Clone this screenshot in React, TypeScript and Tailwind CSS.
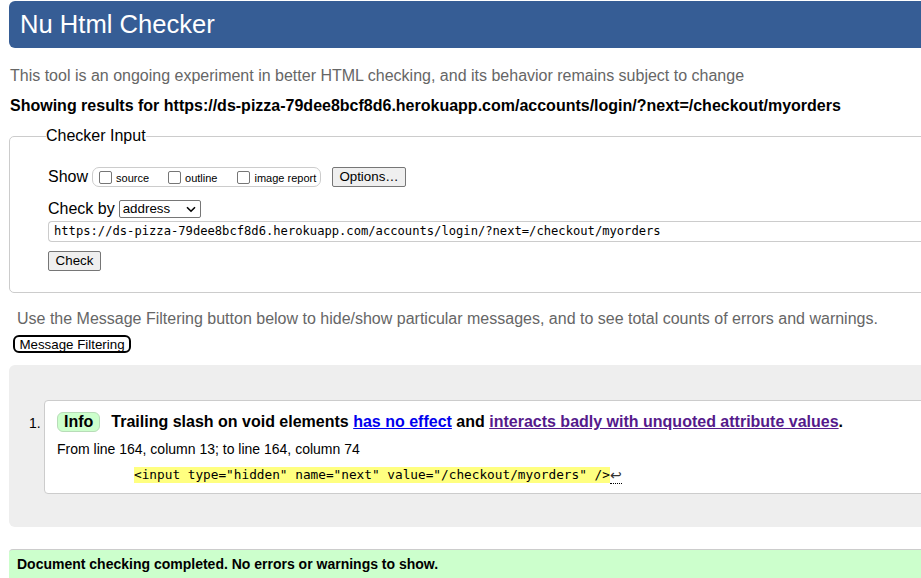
import React from "react";

const sans = "font-['Liberation_Sans',Arial,sans-serif]";
const mono = "font-['DejaVu_Sans_Mono','Liberation_Mono',monospace]";

function Box({ label }: { label: string }) {
  return (
    <label className="flex items-center">
      <span className="w-[13px] h-[13px] border border-[#767676] rounded-[2px] bg-white" />
      <span className="ml-[4px] text-[11px] leading-[13px] text-black translate-y-[1px]">{label}</span>
    </label>
  );
}

export default function App() {
  return (
    <div className={`w-[921px] h-[578px] overflow-hidden bg-white text-black ${sans}`}>
      <div className="w-[1100px]">
        {/* Header */}
        <div className="ml-[9px] mt-[1px] h-[47px] rounded-[6px] bg-[#365d95] pl-[11px] flex items-center">
          <h1 className="text-white text-[25.6px] leading-none font-normal">Nu Html Checker</h1>
        </div>

        <p className="ml-[10px] mt-[19px] text-[16px] leading-[18px] text-[#666]">
          This tool is an ongoing experiment in better HTML checking, and its behavior remains subject to change
        </p>
        <p className="ml-[10px] mt-[12px] text-[16px] leading-[18px] font-bold">
          Showing results for https://ds-pizza-79dee8bcf8d6.herokuapp.com/accounts/login/?next=/checkout/myorders
        </p>

        {/* Checker Input */}
        <fieldset className="ml-[9px] mt-[12px] w-[1080px] border border-[#ccc] rounded-[5px] pl-[38px] pb-[20px]">
          <legend className="-ml-[2px] text-[16px] leading-[18px] text-black p-0">Checker Input</legend>
          <div className="mt-[22px] flex items-center h-[20px]">
            <span className="text-[16px] leading-[18px]">Show</span>
            <div className="ml-[4px] h-[20px] w-[229px] border border-[#ccc] rounded-[7px] flex items-center pl-[6px]">
              <Box label="source" />
              <span className="w-[19px]" />
              <Box label="outline" />
              <span className="w-[20px]" />
              <Box label="image report" />
            </div>
            <button className="ml-[11px] h-[20px] w-[74px] bg-[#efefef] border border-[#767676] rounded-[2px] text-[13.33px] leading-none text-black">
              Options…
            </button>
          </div>
          <div className="mt-[13px] flex items-center h-[18px]">
            <span className="text-[16px] leading-[18px]">Check by</span>
            <div className="ml-[4px] h-[18px] w-[82px] border border-[#767676] rounded-[2px] bg-white flex items-center pl-[3px] pr-[4px] justify-between">
              <span className="text-[13.33px] leading-none">address</span>
              <svg width="10" height="7" viewBox="0 0 10 7">
                <path d="M1 1.2 L5 5.2 L9 1.2" fill="none" stroke="#000" strokeWidth="1.6" />
              </svg>
            </div>
          </div>
          <div className={`mt-[3px] h-[21px] border border-[#ccc] rounded-l-[4px] border-r-0 flex items-center pl-[5px] ${mono} text-[12.15px] leading-none text-black`}>
            https://ds-pizza-79dee8bcf8d6.herokuapp.com/accounts/login/?next=/checkout/myorders
          </div>
          <button className="mt-[9px] h-[20px] w-[53px] bg-[#efefef] border border-[#767676] rounded-[2px] text-[13.33px] leading-none text-black">
            Check
          </button>
        </fieldset>

        <p className="ml-[17px] mt-[17px] text-[16px] leading-[18px] text-[#666]">
          Use the Message Filtering button below to hide/show particular messages, and to see total counts of errors and warnings.
        </p>
        <button className="ml-[13px] mt-[7px] h-[18px] w-[118px] border-2 border-black rounded-[6px] bg-white text-[13.33px] leading-none text-black flex items-center justify-center">
          Message Filtering
        </button>

        {/* Results */}
        <div className="ml-[9px] mt-[12px] h-[162px] bg-[#eee] rounded-tl-[6px] rounded-bl-[6px] pt-[35px] flex">
          <div className="w-[35px] pt-[15px] pl-[20px] text-[14px] leading-[16px]">1.</div>
          <div className="flex-1 h-[94px] bg-white border border-[#ccc] rounded-[4px] pl-[12px] pt-[11px]">
            <div className="flex items-center h-[20px]">
              <span className="h-[20px] px-[6px] bg-[#ccffcc] border border-[#b8dcb8] rounded-[6px] text-[16px] font-bold leading-[18px] flex items-center">
                Info
              </span>
              <span className="ml-[11px] text-[16px] font-bold leading-[18px]">
                Trailing slash on void elements{" "}
                <a className="text-[#0000ee] underline">has no effect</a> and{" "}
                <a className="text-[#551a8b] underline">interacts badly with unquoted attribute values</a>.
              </span>
            </div>
            <p className="mt-[9px] text-[14px] leading-[16px]">From line 164, column 13; to line 164, column 74</p>
            <div className="mt-[10px] ml-[77px] flex items-center h-[16px]">
              <code className={`${mono} text-[12.75px] leading-[16px] bg-[#ffff80] whitespace-pre`}>
                {'<input type="hidden" name="next" value="/checkout/myorders" />'}
              </code>
              <span className="text-[14px] leading-[16px] text-[#333] border-b border-dotted border-black">↩</span>
            </div>
          </div>
        </div>

        <div className="ml-[9px] mt-[22px] h-[40px] bg-[#ccffcc] border-t border-[#ccc] rounded-tl-[4px] pl-[8px] pt-[6px]">
          <p className="text-[14px] font-bold leading-[16px]">Document checking completed. No errors or warnings to show.</p>
        </div>
      </div>
    </div>
  );
}
